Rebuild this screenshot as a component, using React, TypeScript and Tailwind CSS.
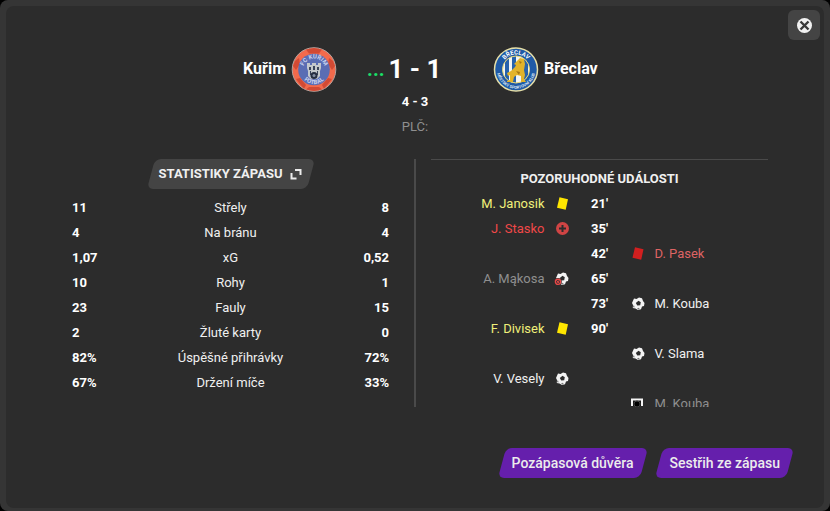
import React from 'react';
import { clsx } from 'clsx';

type IconName = 'yellow' | 'red' | 'injury' | 'missed' | 'goal' | 'post';

type MatchEvent = {
  side: 'home' | 'away';
  name: string;
  icon: IconName;
  color: string;
  minute?: string;
};

const stats = [
  { label: 'Střely', home: '11', away: '8' },
  { label: 'Na bránu', home: '4', away: '4' },
  { label: 'xG', home: '1,07', away: '0,52' },
  { label: 'Rohy', home: '10', away: '1' },
  { label: 'Fauly', home: '23', away: '15' },
  { label: 'Žluté karty', home: '2', away: '0' },
  { label: 'Úspěšné přihrávky', home: '82%', away: '72%' },
  { label: 'Držení míče', home: '67%', away: '33%' },
];

const events: MatchEvent[] = [
  { side: 'home', name: 'M. Janosik', icon: 'yellow', color: 'text-[#f0f07a]', minute: "21'" },
  { side: 'home', name: 'J. Stasko', icon: 'injury', color: 'text-[#f04848]', minute: "35'" },
  { side: 'away', name: 'D. Pasek', icon: 'red', color: 'text-[#de6464]', minute: "42'" },
  { side: 'home', name: 'A. Mąkosa', icon: 'missed', color: 'text-[#8f8f8f]', minute: "65'" },
  { side: 'away', name: 'M. Kouba', icon: 'goal', color: 'text-[#f0f0f0]', minute: "73'" },
  { side: 'home', name: 'F. Divisek', icon: 'yellow', color: 'text-[#f0f07a]', minute: "90'" },
  { side: 'away', name: 'V. Slama', icon: 'goal', color: 'text-[#f0f0f0]' },
  { side: 'home', name: 'V. Vesely', icon: 'goal', color: 'text-[#f0f0f0]' },
  { side: 'away', name: 'M. Kouba', icon: 'post', color: 'text-[#8f8f8f]' },
];

const Ball = () => (
  <>
    <path d="M4 2.500L6.500 3 9 1.500l3 .8 1 2.700 1.500 2-.5 3-2 .5-1 2.700-3 .8-2.500-1.500-2.700-.5.2-3L2 7z" fill="#f4f4f4" />
    <path d="M8.500 4.800l2.300 1.500-.6 2.900-2.900.3-1.500-2.500z" fill="#2c2c2c" />
    <path d="M3 9.500l1.300.2.2 1.800-1.300-.3zM7 12.500l1.500-.8 1.200 1-.7 1z" fill="#777" />
  </>
);

const EventIcon = ({ name }: { name: IconName }) => (
  <svg viewBox="0 0 16 16" className="size-4" aria-hidden="true">
    {name === 'yellow' && <path d="M5.500 1.200l8.500 2-2.300 10.500-8.700-2z" fill="#ffe600" />}
    {name === 'red' && <path d="M5 1.200l8.500 2-2.300 10.500-8.700-2z" fill="#d21f1f" />}
    {name === 'injury' && (
      <>
        <circle cx="8.500" cy="7.500" r="6.500" fill="#d04444" />
        <path d="M8.500 4v7M5 7.500h7" stroke="#2c2c2c" strokeWidth="2" />
      </>
    )}
    {name === 'goal' && <Ball />}
    {name === 'missed' && (
      <>
        <Ball />
        <circle cx="4" cy="10.800" r="3.800" fill="#2c2c2c" />
        <circle cx="4" cy="10.800" r="2.600" fill="#2c2c2c" stroke="#e84848" strokeWidth="1.400" />
        <path d="M2.600 9.600L5.200 12M5.200 9.600L2.600 12" stroke="#e84848" strokeWidth="1" />
      </>
    )}
    {name === 'post' && (
      <>
        <path d="M2 10V3.500h10V10" fill="#1a1a1a" stroke="#f4f4f4" strokeWidth="2" />
        <circle cx="7" cy="8" r="3" fill="#000" stroke="#444" />
      </>
    )}
  </svg>
);

const KurimCrest = () => (
  <svg viewBox="0 0 46 46" className="size-[46px] shrink-0" role="img" aria-label="FC Kuřim">
    <defs>
      <path id="kurim-top" d="M12 23.500a11 11 0 0 1 22 0" />
      <path id="kurim-bottom" d="M8.500 23.500a14.500 14.500 0 0 0 29 0" />
    </defs>
    <circle cx="23" cy="23.500" r="21.800" fill="#f26a4c" stroke="#b5a29d" strokeWidth="1" />
    <path d="M15 3.500L23 2l8 1.500-3 4H18zM4 15l4-3 1 6-4 6-3-4zM42 15l-4-3-1 6 4 6 3-4zM5 33l4-1 6 7-2 4zM41 33l-4-1-6 7 2 4zM18 41h10l3 2.500-8 1.500-8-1.500z" fill="#d24a34" />
    <circle cx="23" cy="23.500" r="15.800" fill="#5a6db4" />
    <text fill="#c9d2ee" fontSize="6" className="font-['Roboto'] font-bold" textAnchor="middle">
      <textPath href="#kurim-top" startOffset="50%">FC KUŘIM</textPath>
    </text>
    <text fill="#c9d2ee" fontSize="6" className="font-['Roboto'] font-bold" textAnchor="middle">
      <textPath href="#kurim-bottom" startOffset="50%">FOTBAL</textPath>
    </text>
    <path d="M16 17h3v2h2v-2h4v2h2v-2h3v5l-1 3v5l-3 3h-6l-3-3v-5l-1-3z" fill="#c3c8cc" />
    <path d="M18 21h2v3h-2zM22 20h2v4h-2zM26 21h2v3h-2zM19 25h1v4h-1zM26 25h1v4h-1z" fill="#39445c" />
    <circle cx="23" cy="29.500" r="3.500" fill="#252e42" />
    <circle cx="23" cy="29.500" r="1.500" fill="#8590a5" />
  </svg>
);

const BreclavCrest = () => (
  <svg viewBox="0 0 46 46" className="size-[46px] shrink-0" role="img" aria-label="Břeclav">
    <defs>
      <path id="breclav-top" d="M8 23.500a15 15 0 0 1 30 0" />
      <path id="breclav-bottom" d="M4 20a19.300 19.300 0 1 0 38 0" />
      <clipPath id="breclav-inner">
        <circle cx="23" cy="23.500" r="13.500" />
      </clipPath>
    </defs>
    <circle cx="23" cy="23.500" r="21.500" fill="#1f5aa6" stroke="#e6dfa8" strokeWidth="1.500" />
    <circle cx="23" cy="23.500" r="13.500" fill="#f3f5f4" />
    <g clipPath="url(#breclav-inner)" fill="#2762ac">
      <path d="M12 8h4v30h-4zM19 8h4v30h-4zM31 8h4v30h-4z" />
    </g>
    <circle cx="23" cy="23.500" r="13.500" fill="none" stroke="#e6d774" strokeWidth="1" />
    <path d="M24 15l3-3 4 1 1 5-1 6 1 5-1 4 2 3h-5v-6l-4-1-3 2-1 5h-6v-1l3-1v-5l-2 1-1-3 4-2 4-4 1-2-2-1z" fill="#e2b32a" />
    <path d="M26 15l3 1-2 2zM23 25l4 1-1 3z" fill="#a77714" />
    <text fill="#fff" fontSize="6" className="font-['Roboto'] font-bold" textAnchor="middle">
      <textPath href="#breclav-top" startOffset="50%">BŘECLAV</textPath>
    </text>
    <text fill="#dce6f2" fontSize="4" className="font-['Roboto'] font-bold" textAnchor="middle">
      <textPath href="#breclav-bottom" startOffset="50%">MĚSTSKÝ SPORTOVNÍ KLUB</textPath>
    </text>
  </svg>
);

const slanted =
  'relative isolate flex h-[30px] cursor-pointer items-center before:absolute before:inset-0 before:-z-10 before:-skew-x-[15deg] before:rounded-md';

const ActionButton = ({ children }: { children: React.ReactNode }) => (
  <button
    type="button"
    className={clsx(slanted, 'px-[10px] text-sm font-medium text-[#ececec] before:bg-[#651fac]')}
  >
    {children}
  </button>
);

const EventRow = ({ event }: { event: MatchEvent }) => {
  const home = event.side === 'home';
  return (
    <li className="grid h-[25px] grid-cols-[1fr_16px_60px_16px_1fr] items-center">
      <span className={clsx('pr-[9px] text-right', event.color)}>{home && event.name}</span>
      <span>{home && <EventIcon name={event.icon} />}</span>
      <span className="text-center font-bold text-white">{event.minute}</span>
      <span>{!home && <EventIcon name={event.icon} />}</span>
      <span className={clsx('pl-[9px]', event.color)}>{!home && event.name}</span>
    </li>
  );
};

export default function App() {
  return (
    <div className="min-h-screen bg-black font-['Roboto','Liberation_Sans',sans-serif] text-[13px] leading-5 text-[#f0f0f0]">
      <main className="flex min-h-screen flex-col rounded-lg bg-[#353535] px-1.5 pt-1.5 pb-[3px]">
        <div className="relative flex grow flex-col rounded-lg bg-[#2c2c2c] px-10 pt-10 pb-[30px]">
          <button
            type="button"
            aria-label="Zavřít"
            className="absolute top-1 right-1 flex h-[30px] w-8 cursor-pointer items-center justify-center rounded-md bg-[#444]"
          >
            <svg viewBox="0 0 16 16" className="size-4" aria-hidden="true">
              <circle cx="8.500" cy="8.500" r="7.500" fill="#f2f2f2" />
              <path d="M4.500 4.500l8 8M12.500 4.500l-8 8" stroke="#3a3a3a" strokeWidth="2.400" />
            </svg>
          </button>

          <header>
            <div className="grid grid-cols-[1fr_156px_1fr] items-center">
              <div className="flex items-center justify-end gap-[5px]">
                <h2 className="text-base font-bold text-white">Kuřim</h2>
                <KurimCrest />
              </div>
              <div className="grid grid-cols-[1fr_auto_1fr] items-center text-white">
                <span className="pr-1 text-right text-xl font-bold text-[#19e068]">...</span>
                <strong className="text-[26px] leading-8 font-bold">1 - 1</strong>
              </div>
              <div className="flex items-center gap-[5px]">
                <BreclavCrest />
                <h2 className="text-base font-bold text-white">Břeclav</h2>
              </div>
            </div>
            <p className="text-center font-bold text-white">4 - 3</p>
            <p className="mt-[5px] text-center text-[#8f8f8f]">PLČ:</p>
          </header>

          <div className="mt-[22px] -mr-0.5 grid h-[248px] grid-cols-2">
            <section className="border-r-2 border-[#4a4a4a] pr-[25px] pl-[26px]">
              <button
                type="button"
                className={clsx(slanted, 'mx-auto gap-2 px-2 font-bold text-[#f0f0f0] before:bg-[#444]')}
              >
                STATISTIKY ZÁPASU
                <svg viewBox="0 0 12 12" className="size-3" fill="none" stroke="#ececec" strokeWidth="2" aria-hidden="true">
                  <path d="M5 2h5.500v5M1.500 5v5.500h5" />
                </svg>
              </button>
              <table className="mt-1.5 w-full">
                <tbody>
                  {stats.map((s) => (
                    <tr key={s.label} className="h-[25px]">
                      <td className="w-1/5 font-bold text-white">{s.home}</td>
                      <th scope="row" className="text-center font-normal">{s.label}</th>
                      <td className="w-1/5 text-right font-bold text-white">{s.away}</td>
                    </tr>
                  ))}
                </tbody>
              </table>
            </section>

            <section className="mr-[18px] ml-[15px] overflow-hidden border-t border-[#4a4a4a] pt-[9px]">
              <h3 className="text-center font-bold">POZORUHODNÉ UDÁLOSTI</h3>
              <ul className="mt-0.5">
                {events.map((e, i) => (
                  <EventRow key={i} event={e} />
                ))}
              </ul>
            </section>
          </div>

          <footer className="mt-auto -mr-1.5 flex justify-end gap-4">
            <ActionButton>Pozápasová důvěra</ActionButton>
            <ActionButton>Sestřih ze zápasu</ActionButton>
          </footer>
        </div>
      </main>
    </div>
  );
}
